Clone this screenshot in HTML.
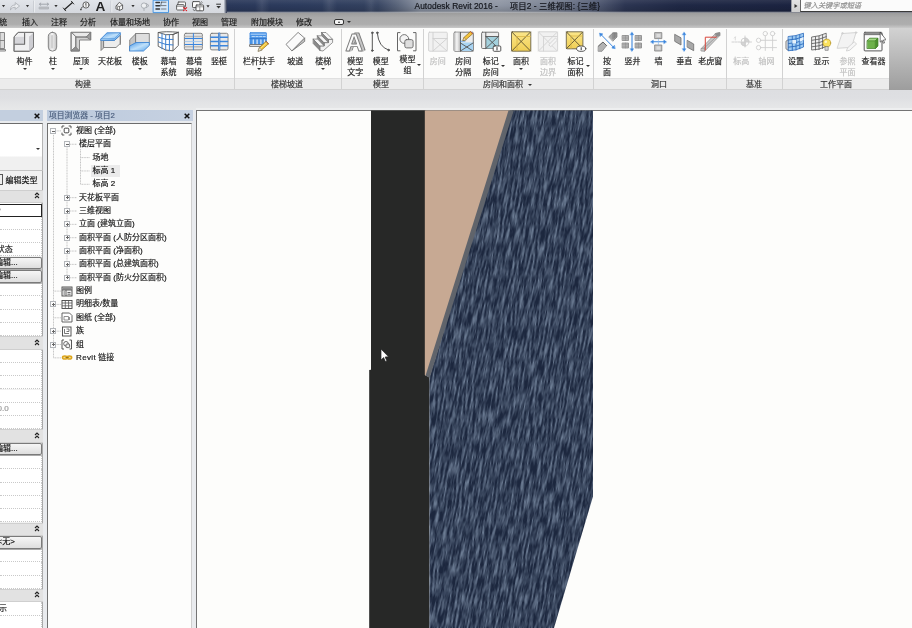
<!DOCTYPE html>
<html lang="zh"><head><meta charset="utf-8"><title>Autodesk Revit 2016 - 项目2 - 三维视图: {三维}</title>
<style>
*{box-sizing:border-box;margin:0;padding:0}
html,body{width:912px;height:628px;overflow:hidden;background:#fdfdfb}
body{font-family:"Liberation Sans","Noto Sans CJK SC",sans-serif;font-size:8px;color:#222;position:relative;line-height:1}
.abs{position:absolute}
.t{position:absolute;white-space:nowrap;transform:translate(-50%,-50%);text-align:center;line-height:10.8px;filter:blur(.25px);-webkit-text-stroke:.18px currentColor}
.tl{position:absolute;white-space:nowrap;transform:translate(0,-50%);line-height:10px;filter:blur(.25px);-webkit-text-stroke:.18px currentColor}
.dis{color:#c0c0c0}
.sep{position:absolute;top:29px;width:1px;height:60px;background:#d2d2d2}
.arr{position:absolute;width:0;height:0;border-left:2px solid transparent;border-right:2px solid transparent;border-top:2.5px solid #333;transform:translate(-50%,-50%)}
svg{position:absolute;overflow:visible}
</style></head><body>

<div class="abs" id="titlebar" style="left:0;top:0;width:912px;height:13px;background:linear-gradient(90deg,#2a385a 224px,#2c3b5d 300px,#33415f 375px,#5b667c 398px,#878f9e 420px,#8f96a4 500px,#7d8595 545px,#5a637a 590px,#2c3552 625px,#1f2845 680px,#1b2340 795px)"></div>
<div class="abs" style="left:0;top:0;width:912px;height:13px;background:linear-gradient(90deg,rgba(255,255,255,0) 255px,rgba(255,255,255,.09) 262px,rgba(255,255,255,0) 270px,rgba(255,255,255,0) 322px,rgba(255,255,255,.09) 329px,rgba(255,255,255,0) 337px,rgba(255,255,255,0) 364px,rgba(255,255,255,.08) 371px,rgba(255,255,255,0) 378px)"></div>
<div class="abs" style="left:0;top:0;width:912px;height:13px;background:linear-gradient(180deg,rgba(255,255,255,.08),rgba(255,255,255,0) 40%,rgba(0,0,0,.12) 85%,rgba(190,190,190,.9) 100%)"></div>
<div class="abs" id="qat" style="left:0;top:0;width:224px;height:13px;background:linear-gradient(180deg,#e2e5ea,#d5d8de)"></div>
<div class="abs" style="left:224px;top:0;width:3px;height:13px;background:linear-gradient(90deg,#c8ccd4,#27304a)"></div>
<div class="tl" style="left:414.5px;top:6px;font-size:8.4px;color:#14161c;letter-spacing:.05px">Autodesk Revit 2016 -&nbsp;&nbsp;&nbsp;&nbsp;&nbsp;项目2 - 三维视图: {三维}</div>
<div class="abs" style="left:790.5px;top:0;width:10px;height:11.6px;background:linear-gradient(180deg,#e4e4e4,#cfcfcf);border-right:1px solid #7a7a7a;border-left:1px solid #9a9da5"></div>
<div class="arr" style="left:795.5px;top:5.8px;border-top:2.5px solid transparent;border-bottom:2.5px solid transparent;border-left:3px solid #333;border-right:0"></div>
<div class="abs" style="left:800px;top:0;width:112px;height:12px;background:#fbfbfb;border-bottom:1.5px solid #3a3a3a;border-left:1px solid #666"></div>
<div class="tl" style="left:803.5px;top:5.6px;font-size:7.2px;font-style:italic;color:#8f8f8f">键入关键字或短语</div>

<div class="abs" id="tabbar" style="left:0;top:13px;width:912px;height:15px;background:linear-gradient(180deg,#9c9c9c 0,#aaaaaa 30%,#adadad 75%,#c9c9c9 100%)"></div>
<div class="t" style="left:3px;top:23px;font-size:8px;color:#1d1d1d">统</div>
<div class="t" style="left:30px;top:23px;font-size:8px;color:#1d1d1d">插入</div>
<div class="t" style="left:59px;top:23px;font-size:8px;color:#1d1d1d">注释</div>
<div class="t" style="left:88px;top:23px;font-size:8px;color:#1d1d1d">分析</div>
<div class="t" style="left:130px;top:23px;font-size:8px;color:#1d1d1d">体量和场地</div>
<div class="t" style="left:171px;top:23px;font-size:8px;color:#1d1d1d">协作</div>
<div class="t" style="left:200px;top:23px;font-size:8px;color:#1d1d1d">视图</div>
<div class="t" style="left:229px;top:23px;font-size:8px;color:#1d1d1d">管理</div>
<div class="t" style="left:267px;top:23px;font-size:8px;color:#1d1d1d">附加模块</div>
<div class="t" style="left:304px;top:23px;font-size:8px;color:#1d1d1d">修改</div>
<div class="abs" style="left:334px;top:18.5px;width:10px;height:6px;border:1px solid #333;border-radius:2px;background:#f4f4f4"></div>
<div class="arr" style="left:339px;top:21.5px;border-top:0;border-bottom:2px solid #333;border-left-width:1.5px;border-right-width:1.5px"></div>
<div class="arr" style="left:348.5px;top:22px"></div>

<div class="abs" id="ribbon" style="left:0;top:28px;width:889px;height:50px;background:#fcfcfb"></div>
<div class="abs" id="ribtitle" style="left:0;top:77.8px;width:889px;height:12.2px;background:#ececec;border-top:1px solid #e0e0e0;border-bottom:1.2px solid #d2d2d2"></div>
<div class="abs" style="left:889px;top:28px;width:23px;height:62px;background:linear-gradient(180deg,#d2d2d2,#bdbdbd 40%,#9d9d9d)"></div>
<div class="abs" id="optbar" style="left:0;top:90px;width:912px;height:20px;background:linear-gradient(180deg,#dddee1 0,#dedfe2 8px,#e3e4e6 13px,#e7e8e9 100%)"></div>
<div class="sep" style="left:234px"></div><div class="sep" style="left:341px"></div><div class="sep" style="left:422.5px"></div><div class="sep" style="left:592.5px"></div><div class="sep" style="left:726px"></div><div class="sep" style="left:782px"></div>
<div class="t" style="left:24.6px;top:61.6px">构件</div><div class="arr" style="left:24.6px;top:69.3px"></div>
<div class="t" style="left:53px;top:61.6px">柱</div><div class="arr" style="left:53px;top:69.3px"></div>
<div class="t" style="left:81px;top:61.6px">屋顶</div><div class="arr" style="left:81px;top:69.3px"></div>
<div class="t" style="left:110px;top:61.6px">天花板</div>
<div class="t" style="left:139.8px;top:61.6px">楼板</div><div class="arr" style="left:139.8px;top:69.3px"></div>
<div class="t" style="left:168.4px;top:61.6px">幕墙</div><div class="t" style="left:168.4px;top:72.6px">系统</div>
<div class="t" style="left:194px;top:61.6px">幕墙</div><div class="t" style="left:194px;top:72.6px">网格</div>
<div class="t" style="left:219px;top:61.6px">竖梃</div>
<div class="t" style="left:259px;top:61.6px">栏杆扶手</div><div class="arr" style="left:259px;top:69.3px"></div>
<div class="t" style="left:295.3px;top:61.6px">坡道</div>
<div class="t" style="left:323.2px;top:61.6px">楼梯</div><div class="arr" style="left:323.2px;top:69.3px"></div>
<div class="t" style="left:355.3px;top:61.6px">模型</div><div class="t" style="left:355.3px;top:72.6px">文字</div>
<div class="t" style="left:380.7px;top:61.6px">模型</div><div class="t" style="left:380.7px;top:72.6px">线</div>
<div class="t" style="left:407.4px;top:60.3px">模型</div><div class="t" style="left:407.4px;top:71.3px">组</div><div class="arr" style="left:419.2px;top:65px"></div>
<div class="t dis" style="left:437.7px;top:61.6px">房间</div>
<div class="t" style="left:463.2px;top:61.6px">房间</div><div class="t" style="left:463.2px;top:72.6px">分隔</div>
<div class="t" style="left:490.7px;top:61.6px">标记</div><div class="t" style="left:490.7px;top:72.6px">房间</div><div class="arr" style="left:502.9px;top:66px"></div>
<div class="t" style="left:521px;top:61.6px">面积</div><div class="arr" style="left:521px;top:69.3px"></div>
<div class="t dis" style="left:548px;top:61.6px">面积</div><div class="t dis" style="left:548px;top:72.6px">边界</div>
<div class="t" style="left:575.4px;top:61.6px">标记</div><div class="t" style="left:575.4px;top:72.6px">面积</div><div class="arr" style="left:587.6px;top:66px"></div>
<div class="t" style="left:607px;top:61.6px">按</div><div class="t" style="left:607px;top:72.6px">面</div>
<div class="t" style="left:632.5px;top:61.6px">竖井</div>
<div class="t" style="left:658.4px;top:61.6px">墙</div>
<div class="t" style="left:684.2px;top:61.6px">垂直</div>
<div class="t" style="left:710.2px;top:61.6px">老虎窗</div>
<div class="t dis" style="left:741.2px;top:61.6px">标高</div>
<div class="t dis" style="left:766.4px;top:61.6px">轴网</div>
<div class="t" style="left:796px;top:61.6px">设置</div>
<div class="t" style="left:821.6px;top:61.6px">显示</div>
<div class="t dis" style="left:847.6px;top:61.6px">参照</div><div class="t dis" style="left:847.6px;top:72.6px">平面</div>
<div class="t" style="left:873.4px;top:61.6px">查看器</div>
<div class="t" style="left:83px;top:85.2px;color:#333">构建</div><div class="t" style="left:287px;top:85.2px;color:#333">楼梯坡道</div><div class="t" style="left:381px;top:85.2px;color:#333">模型</div><div class="t" style="left:503px;top:85.2px;color:#333">房间和面积</div><div class="t" style="left:659px;top:85.2px;color:#333">洞口</div><div class="t" style="left:754px;top:85.2px;color:#333">基准</div><div class="t" style="left:836px;top:85.2px;color:#333">工作平面</div><div class="arr" style="left:530px;top:85px"></div>
<svg id="ribicons" style="left:0;top:0;filter:blur(.3px)" width="912" height="110" viewBox="0 0 912 110" stroke-linejoin="round" stroke-linecap="round">
<defs>
<linearGradient id="gv" x1="0" y1="0" x2="0" y2="1"><stop offset="0" stop-color="#f4f4f4"/><stop offset="1" stop-color="#c9c9c9"/></linearGradient>
<linearGradient id="gh" x1="0" y1="0" x2="1" y2="0"><stop offset="0" stop-color="#c4c4c4"/><stop offset=".45" stop-color="#f6f6f6"/><stop offset="1" stop-color="#bdbdbd"/></linearGradient>
<linearGradient id="gb" x1="0" y1="0" x2="1" y2="1"><stop offset="0" stop-color="#4f9be8"/><stop offset=".5" stop-color="#bfe0fa"/><stop offset="1" stop-color="#5aa5ec"/></linearGradient>
<linearGradient id="gy" x1="0" y1="0" x2="0" y2="1"><stop offset="0" stop-color="#fbe68a"/><stop offset="1" stop-color="#f0cf55"/></linearGradient>
</defs>
<g stroke="#7a7a7a" stroke-width=".9"><rect x="-6" y="32.5" width="10.5" height="16" fill="#dcdcdc"/><path d="M-6 40.5H4.5M0 32.5V48.5" fill="none"/><path d="M-6 49.5H5.5V51H-6Z" fill="#e8e8e8"/></g>
<g stroke="#777" stroke-width="1"><path d="M14.4 36.6L18.1 32.4H33.5V47L29.5 51.3H14.4Z" fill="#f0f0f1"/><path d="M29.5 36.6L33.5 32.4V47L29.5 51.3Z" fill="#cdcdd2" stroke="none"/><path d="M15 36.8H24.4V44.2H15Z" fill="#d6d6da" stroke="none"/><path d="M24.6 33.2V44.3H14.6" fill="none" stroke="#686868" stroke-width="1.1"/><path d="M14.4 36.6L18.1 32.4H33.5V47L29.5 51.3H14.4Z" fill="none"/><path d="M29.5 36.8V51" fill="none" stroke="#bdbdc2" stroke-width=".6"/></g>
<g stroke="#7a7a7a" stroke-width=".9"><rect x="48.3" y="32.3" width="8.4" height="18.8" rx="4" fill="url(#gh)"/><rect x="51" y="35" width="2.2" height="13.5" rx="1" fill="#d0d0d0" stroke="none"/></g>
<g stroke="#7a7a7a" stroke-width=".9"><path d="M71.3 32.5H90.7V40H79.5V51H71.3Z" fill="#d2d2d2"/><path d="M71.3 32.5L75.8 37H86.5L90.7 32.5Z" fill="#e9e9e9"/><path d="M86.5 37L90.7 32.5V40L86.5 37Z" fill="#9d9d9d"/><path d="M75.8 37V47L71.3 51V32.5Z" fill="#f3f3f3"/><path d="M75.8 47L79.5 51H71.3Z" fill="#8f8f8f"/><path d="M75.8 37H86.5M75.8 37V47" fill="none"/></g>
<g stroke="#7a7a7a" stroke-width=".9"><path d="M101 40V50.5L104 47.5V40.4Z" fill="#c9c9c9"/><path d="M104 40.4H114.5L120.3 35V43.5L116 47.5H104Z" fill="#ededed"/><path d="M101 38.8L107 32.8H120.3V35L114.5 40.4H101Z" fill="url(#gb)" stroke="#3f86d2"/><path d="M101 38.8H114.5L120.3 32.8" fill="none" stroke="#3f86d2" stroke-width=".7"/><path d="M120.3 36.2V44.5" fill="none"/></g>
<g stroke="#7a7a7a" stroke-width=".9"><path d="M130 39.5L136 33.5V45L130 50.8Z" fill="#c6c6c6"/><path d="M136 33.5H149.3V45H136Z" fill="#dedede"/><path d="M130 45.8L136 42.5H149.3V45.5L143.5 51H130Z" fill="url(#gb)" stroke="#3f86d2"/></g>
<g fill="none" stroke-width=".9"><path d="M158.5 32.5Q166 36 173 34.5L178.3 32.3V45.5L173 50.8Q166 51.5 158.5 46.5Z" fill="#fff" stroke="#555"/><path d="M173 34.5V50.8M178.3 32.3L173 34.5" stroke="#555"/><path d="M158.5 32.5Q165 31 178.3 32.3" stroke="#555"/><path d="M162 34V48.8M165.7 35V50M169.4 35V50.8M158.5 37.3Q166 40.5 173 39.5M158.5 42Q166 45.5 173 45" stroke="#3b7fd0" stroke-width="1"/></g>
<g fill="none"><rect x="184.4" y="33.3" width="18" height="16.6" rx="1.5" fill="#e6e6e6" stroke="#777" stroke-width=".9"/><path d="M185 36.5H202M185 46.8H202" stroke="#b9b9b9" stroke-width="1.6"/><path d="M185 38.5H202M185 44.5H202M193.4 33.5V49.8" stroke="#3b86de" stroke-width="1"/><path d="M185 41.5H202" stroke="#9cc4ee" stroke-width=".8"/></g>
<g fill="none"><rect x="210.4" y="33.3" width="17.6" height="16.6" rx="1.5" fill="#e9e9e9" stroke="#777" stroke-width=".9"/><path d="M211 37.3H227.5M211 41.5H227.5M211 45.7H227.5" stroke="#3b86de" stroke-width="1.5"/><path d="M219.2 33.5V49.8" stroke="#2e6fc2" stroke-width="2.2"/><path d="M219.2 33.5V49.8" stroke="#9cc4ee" stroke-width=".8"/></g>
<g fill="none"><rect x="249.9" y="32.5" width="16.6" height="11.8" rx=".8" fill="#4a93e6" stroke="#3b84da" stroke-width=".6"/><path d="M251 34.2H265.5" stroke="#b5d8fa" stroke-width="1"/><path d="M252 36.6H254.5M255.8 36.6H258.2M259.6 36.6H262M263.3 36.6H265.3" stroke="#cfe6fc" stroke-width=".9"/><path d="M250 38.6H266.4" stroke="#2f74c8" stroke-width=".8"/><path d="M253.3 40V44M257.1 40V44M260.9 40V44M264.5 40V43" stroke="#cfe4fa" stroke-width="1.3"/><path d="M250 44.6H262.3V46.4H250Z" fill="#fafafa" stroke="#555" stroke-width=".8"/><path d="M258.2 50.9L259.3 47.7L266 41.4L268.5 43.8L261.6 50Z" fill="#f5c73a" stroke="#8c6a1a" stroke-width=".7"/><path d="M260.4 48.6L266.9 42.5" stroke="#fbe88a" stroke-width=".9"/><path d="M258.2 50.9L259.3 47.7L261.6 50Z" fill="#e9e4da" stroke="#777" stroke-width=".5"/><path d="M266 41.4L268.5 43.8" stroke="#a0522d" stroke-width="1"/></g>
<g stroke="#7a7a7a" stroke-width=".9"><path d="M286.3 44.1L298.1 32.4L304.7 38.2L292.2 50.7Z" fill="#fafafa"/><path d="M304.7 38.2V41.4L292.2 50.7Z" fill="#c4c4c4"/></g>
<g stroke="#6f6f6f" stroke-width=".7"><path d="M320 45.9H324.2V42.6H328.4V39.3H332.6V42.5L323 51L320 50.5Z" fill="#f1f1f1"/><path d="M313.4 39.1L320 45.9V50.5L313.4 43.7Z" fill="#8b8b8b"/><path d="M317.6 35.8L324.2 42.6V45.9L317.6 39.1Z" fill="#8b8b8b"/><path d="M321.8 32.5L328.4 39.3V42.6L321.8 35.8Z" fill="#8b8b8b"/><path d="M321.8 32.5H326L332.6 39.3H328.4Z" fill="#f6f6f6"/><path d="M317.6 35.8H321.8L328.4 42.6H324.2Z" fill="#f6f6f6"/><path d="M313.4 39.1H317.6L324.2 45.9H320Z" fill="#f6f6f6"/></g>
<g font-family="Liberation Sans, sans-serif" font-weight="bold" font-size="24.5" text-anchor="middle" stroke-width=".9"><text x="356.8" y="50.3" fill="#c6c6c6" stroke="#7d7d7d">A</text><text x="355.6" y="50.5" fill="#c6c6c6" stroke="#c6c6c6">A</text><text x="354.2" y="50.8" fill="#fbfbfb" stroke="#7d7d7d">A</text></g>
<g fill="none" stroke="#555" stroke-width="1"><path d="M372.3 33V50.5"/><path d="M377.3 33Q378.5 47 388.5 50"/><circle cx="372.3" cy="32.8" r=".8" fill="#555"/><circle cx="372.3" cy="50.6" r=".8" fill="#555"/><circle cx="377.3" cy="32.8" r=".8" fill="#555"/><circle cx="388.6" cy="50.1" r=".8" fill="#555"/></g>
<g fill="none" stroke="#666" stroke-width="1"><path d="M400 32.6H397.5V50.8H400M413.5 32.6H416V50.8H413.5"/><circle cx="404.3" cy="39" r="4.4" fill="#f4f4f4" stroke-width=".9"/><rect x="404.8" y="39.6" width="8.3" height="8.3" rx="1.8" fill="#dedede" stroke-width=".9"/></g>
<g fill="none" stroke="#cfcfcf" stroke-width=".9"><rect x="428.6" y="32.2" width="18.7" height="19" rx="1" fill="#f1f1f1"/><path d="M433 32.5V51M433 38.5H447M433 38.5L447 51M447 38.5L433 51"/></g>
<g fill="none" stroke="#666" stroke-width=".9"><rect x="454" y="32.2" width="19.3" height="19" rx="1" fill="#ececec"/><path d="M454.3 32.5H460V51H454.3Z" fill="url(#gh)" stroke="none"/><path d="M460.5 42.5H473V51H460.5Z" fill="#a9d4f2" stroke="none"/><path d="M460.5 32.5V51M460.5 43L473 51M473 43L460.5 51" stroke="#555"/><path d="M460.5 41.2H465" stroke="#4a90d9" stroke-width=".8"/><path d="M463 40.2L464 37.4L470.5 31.6L472.6 33.8L466 39.6Z" fill="#f3c33c" stroke="#8c6a1a" stroke-width=".7"/><path d="M463 40.2L464 37.4L466 39.6Z" fill="#f6ead0" stroke="#8c6a1a" stroke-width=".5"/><path d="M470.5 31.6L472.6 33.8" stroke="#c2563a" stroke-width="1"/></g>
<g fill="none" stroke="#666" stroke-width=".9"><rect x="481.6" y="32.2" width="17" height="16.3" rx="1" fill="#ededed"/><path d="M486 36.5H498.3V48.3H486Z" fill="#a3d0dc" stroke="none"/><path d="M485.8 32.5V48.3M485.8 36.5H498.4M486 36.5L498.4 48.3M498.4 36.5L486 48.3" stroke="#555"/><rect x="493.2" y="46" width="7.6" height="5.3" rx="1" fill="#fff" stroke="#444" stroke-width=".9"/><path d="M497 47.5V50" stroke="#333" stroke-width="1"/></g>
<g fill="none" stroke="#5b5130" stroke-width=".9"><rect x="511.5" y="31.8" width="19.3" height="19.4" rx=".8" fill="url(#gy)" stroke="#6a6247"/><path d="M511.8 32L530.5 51M530.5 32L511.8 51"/><path d="M517 36.5H530.5M517 36.5V51" stroke="#d9b545" stroke-width=".8"/></g>
<g fill="none" stroke="#d2d2d2" stroke-width=".9"><rect x="538.3" y="31.8" width="19.3" height="19.4" rx=".8" fill="#f1f1f1"/><path d="M538.5 32L557.3 51M557.3 32L538.5 51M543.5 36.5H557M543.5 36.5V51"/><path d="M549 44.5L555.5 38L557.5 40L551 46.5Z" fill="#f4f4f4"/></g>
<g fill="none" stroke="#5b5130" stroke-width=".9"><rect x="566.3" y="31.8" width="16.6" height="17" rx=".8" fill="url(#gy)" stroke="#6a6247"/><path d="M566.5 32L582.7 48.6M582.7 32L566.5 48.6"/><path d="M571 36H582.7M571 36V48.6" stroke="#d9b545" stroke-width=".8"/><ellipse cx="581.2" cy="48.7" rx="4.6" ry="2.7" fill="#fff" stroke="#444" stroke-width=".9"/><path d="M581.2 47.6V49.8" stroke="#333" stroke-width="1"/></g>
<g stroke="#7a7a7a" stroke-width=".7"><path d="M609 36.6L613 32.8H617V37L613 41Z" fill="#a4a4a4"/><path d="M613 32.8V38.5M614.4 32.8V38M615.8 32.8V37" fill="none" stroke="#6a6a6a" stroke-width=".6"/><path d="M598.5 46L603 42L606.6 45.6L602 51.3H598.5Z" fill="#b3b3b3"/><path d="M598.5 46L603 42L606.6 45.6" stroke="#555" fill="none"/><path d="M600.5 34L614 47.8" stroke="#3b86de" stroke-width="1" fill="none"/><path d="M599.8 33.3l3 .6-2.4 2.4zM614.8 48.6l-3-.6 2.4-2.4z" fill="#3b86de" stroke="#3b86de" stroke-width=".6"/></g>
<g stroke="#7d7d7d" stroke-width=".7" fill="#b9b9b9"><rect x="622.5" y="35.5" width="6" height="5"/><rect x="622.5" y="43" width="6" height="5"/><rect x="635.5" y="35.5" width="6" height="5"/><rect x="635.5" y="43" width="6" height="5"/><path d="M622.5 37.2H628.5M622.5 38.8H628.5M622.5 44.7H628.5M622.5 46.3H628.5M635.5 37.2H641.5M635.5 38.8H641.5M635.5 44.7H641.5M635.5 46.3H641.5M625.5 35.5V40.5M625.5 43V48M638.5 35.5V40.5M638.5 43V48" stroke="#8a8a8a" stroke-width=".5" fill="none"/><path d="M632 33.5V50" stroke="#3b86de" stroke-width="1.1" fill="none"/><path d="M632 32.2l1.7 2.6h-3.4zM632 51.3l1.7-2.6h-3.4z" fill="#3b86de" stroke="#3b86de" stroke-width=".4"/></g>
<g stroke="#7d7d7d" stroke-width=".8"><rect x="655" y="32.6" width="6.8" height="6" fill="#c4c4c4"/><rect x="656.5" y="34" width="3.8" height="3" fill="#dcdcdc" stroke="none"/><rect x="655" y="45" width="6.8" height="6" fill="#c4c4c4"/><rect x="656.5" y="46.4" width="3.8" height="3.2" fill="#dcdcdc" stroke="none"/><path d="M652 41.8H665" stroke="#3b86de" stroke-width="1.1" fill="none"/><path d="M650.7 41.8l2.6-1.7v3.4zM666.4 41.8l-2.6-1.7v3.4z" fill="#3b86de" stroke="#3b86de" stroke-width=".4"/><path d="M658.4 39.5V44.5" stroke="#8ab8ec" stroke-width=".7"/></g>
<g stroke="#6d6d6d" stroke-width=".8"><path d="M675 34.5L681 37.8V45L675 41.5Z" fill="#a8a8a8"/><path d="M687.5 40.5L693.7 44V50.7L687.5 47.3Z" fill="#a8a8a8"/><path d="M684.2 33.5V50" stroke="#3b86de" stroke-width="1.1" fill="none"/><path d="M684.2 32.2l1.7 2.6h-3.4zM684.2 51.3l1.7-2.6h-3.4z" fill="#3b86de" stroke="#3b86de" stroke-width=".4"/></g>
<g stroke="#8a8a8a" stroke-width=".7"><path d="M701.3 48.5L715.5 33.5L719.8 32.6V35.5L704.5 51.3L701.3 51Z" fill="#c9c9c9"/><path d="M715.5 33.5L719.8 32.6V35.5L716.5 36.5Z" fill="#8d8d8d"/><path d="M701.3 48.5L704.3 48L704.5 51.3" fill="none"/><path d="M704.3 48L716.5 36.5" fill="none"/><path d="M705.3 50V37.2H716.3" stroke="#d8453a" stroke-width="1" fill="none"/></g>
<g stroke="#cdcdcd" stroke-width=".9" fill="none"><circle cx="745" cy="42" r="4"/><path d="M745 38A4 4 0 0 1 749 42H745ZM745 46A4 4 0 0 1 741 42H745Z" fill="#d4d4d4"/><path d="M732 42H740M745 36V48M750 42H751.5" stroke-dasharray="2 1"/><path d="M735.3 37V40M734.3 38L735.3 37" stroke-width=".7"/></g>
<g stroke="#cfcfcf" stroke-width=".9" fill="none"><circle cx="765.3" cy="33.6" r="2.2"/><circle cx="772.6" cy="33.6" r="2.2"/><circle cx="758.6" cy="40.3" r="2.2"/><circle cx="758.6" cy="47.6" r="2.2"/><path d="M765.3 35.8V50.5M772.6 35.8V50.5M760.8 40.3H776.5M760.8 47.6H776.5"/></g>
<g stroke-width=".8"><path d="M786.3 41L788.5 39.5V50.5L786.3 49Z" fill="#e2e2e2" stroke="#666"/><path d="M788.5 36.5Q796 36.2 803.5 33.2V47Q796 50.8 788.5 50.8Z" fill="#9ccaf3" stroke="#2d6cbd"/><path d="M792.3 36.3V50.6M796 35.7V50M799.8 34.7V48.8M788.5 40Q796 39.7 803.5 36.7M788.5 43.6Q796 43.3 803.5 40.2M788.5 47.2Q796 47 803.5 43.7" stroke="#2d6cbd" fill="none" stroke-width=".9"/><path d="M792.3 40H796V43.5H792.3ZM799.8 38.4L803.5 36.9V40.3L799.8 41.8Z" fill="#e6f2fc" stroke="none"/></g>
<g stroke-width=".8"><path d="M812 37Q819 36.5 826.2 33.2V46.5Q819 50 812 50Z" fill="#efefef" stroke="#555"/><path d="M815.5 36.8V50M819 36.2V49.6M822.6 35V48.5M812 40.3Q819 40 826.2 36.7M812 43.6Q819 43.3 826.2 40.2M812 46.8Q819 46.6 826.2 43.4" stroke="#555" fill="none" stroke-width=".8"/><circle cx="826.8" cy="43" r="3.9" fill="#fbe25e" stroke="#b8962a" stroke-width=".7"/><path d="M825.4 46.6H828.2V50.3H825.4Z" fill="#d9d9d9" stroke="#666" stroke-width=".6"/><circle cx="825.8" cy="41.8" r="1.3" fill="#fff6c5" stroke="none"/></g>
<g stroke="#d0d0d0" stroke-width=".9" fill="#f3f3f3"><path d="M842.5 33.5L856 32.6L851.5 47.3L837.5 48.3Z"/><path d="M846.5 50.6L847.6 47.8L854.2 41.8L856.6 44L850 50Z" fill="#f6f6f6"/><circle cx="842.5" cy="33.3" r=".8" fill="#ccc"/><circle cx="856" cy="32.6" r=".8" fill="#ccc"/></g>
<g stroke-width=".9"><rect x="864.2" y="32.3" width="17.8" height="18.6" rx=".8" fill="#fbfbfb" stroke="#444"/><path d="M864.5 34.6H881.8" stroke="#444" fill="none"/><path d="M864.5 32.6H881.8V34.6H864.5Z" fill="#8e8e8e" stroke="none"/><path d="M867.3 40.6L869.6 38.3H877.8V46L875.5 48.5H867.3Z" fill="#6db14a" stroke="#3e7d25" stroke-width=".7"/><path d="M867.3 40.6L869.6 38.3H877.8L875.5 40.6Z" fill="#a5d887" stroke="#3e7d25" stroke-width=".5"/><path d="M875.5 40.6L877.8 38.3V46L875.5 48.5Z" fill="#4b8f2e" stroke="#3e7d25" stroke-width=".5"/><path d="M880.2 32.6V42.2L882.2 40.4L883.5 43.3L884.6 42.8L883.4 40L885.7 39.8Z" fill="#fff" stroke="#222" stroke-width=".6"/></g>
</svg>

<svg id="qaticons" style="left:0;top:0;filter:blur(.3px)" width="230" height="14" viewBox="0 0 230 14" stroke-linejoin="round" stroke-linecap="round" fill="none">
<path d="M1.9 5H5.1L3.5 7.2Z" fill="#333" stroke="none"/>
<path d="M10.5 9.5Q10.5 5 15.2 5V2.6L19.6 6L15.2 9.4V7.2Q12.5 7 10.5 9.5Z" fill="#e9ebee" stroke="#a9adb3" stroke-width=".8"/>
<path d="M25.9 5H29.1L27.5 7.2Z" fill="#333" stroke="none"/>
<path d="M33.5 1V12" stroke="#bcc0c6" stroke-width=".8"/><path d="M34.3 1V12" stroke="#f4f5f7" stroke-width=".8"/>
<path d="M39.5 4.2H48.5M40.8 3L39.5 4.2L40.8 5.4M47.2 3L48.5 4.2L47.2 5.4" stroke="#9a9ea5" stroke-width=".9"/><path d="M39.5 7H48.5V9H39.5Z" fill="#bfc2c7" stroke="#a2a6ac" stroke-width=".6"/>
<path d="M54.4 5H57.6L56 7.2Z" fill="#333" stroke="none"/>
<path d="M64.5 9.5L72.5 2.5" stroke="#222" stroke-width="1.2"/><path d="M63.3 8L65.8 10.8M71.3 1.2L73.8 4" stroke="#222" stroke-width=".9"/>
<circle cx="86" cy="5" r="3.1" fill="#f2f2f2" stroke="#555" stroke-width=".9"/><path d="M86 3.6V6.4M85.3 4.2L86 3.6" stroke="#444" stroke-width=".7"/><path d="M83.2 6.5Q80.8 7 80.8 9.3" stroke="#555" stroke-width=".9"/><path d="M80 9h1.7v1.2H80z" fill="#555" stroke="none"/>
<text x="100.5" y="11" text-anchor="middle" font-family="Liberation Sans, sans-serif" font-weight="bold" font-size="13.6" fill="#222" stroke="none">A</text>
<path d="M111 1V12" stroke="#bcc0c6" stroke-width=".8"/><path d="M111.8 1V12" stroke="#f4f5f7" stroke-width=".8"/>
<path d="M116.3 5.8L119.3 2.3L122.6 5V9L119.8 10.3L116.3 9Z" fill="#f3f3f3" stroke="#555" stroke-width=".9"/><path d="M116.3 5.8L119.5 6.6L122.6 5M119.5 6.6V10.2" stroke="#555" stroke-width=".7"/><path d="M117.5 7.3v1.6" stroke="#666" stroke-width=".7"/>
<path d="M131.4 5H134.6L133 7.2Z" fill="#333" stroke="none"/>
<circle cx="144" cy="5.6" r="2.7" fill="#eef0f2" stroke="#a6aab0" stroke-width=".9"/><path d="M146.3 3.5L149 5.6L146.3 7.7M144 8.3V10.5" stroke="#a6aab0" stroke-width=".9"/>
<rect x="153.5" y=".2" width="15" height="12.4" fill="#d3e6f9" stroke="#3a8ee0" stroke-width=".9"/><path d="M156 2.6H159.5M156 5.8H159.5M156 9H159.5" stroke="#333" stroke-width="1.5"/><path d="M161.5 2.2H166M161.5 5.6H166M161.5 9H166M160.6 6L161.6 2" stroke="#333" stroke-width=".6"/>
<rect x="178" y="2" width="7.5" height="5" rx=".8" fill="#fdfdfd" stroke="#555" stroke-width=".9"/><rect x="176.6" y="4.6" width="7.5" height="5.4" rx=".8" fill="#fdfdfd" stroke="#555" stroke-width=".9"/><path d="M176.8 6.2H184" stroke="#555" stroke-width=".7"/><path d="M183.6 7.6L186.6 10.6M186.6 7.6L183.6 10.6" stroke="#d8232a" stroke-width="1.2"/>
<rect x="192.5" y="1.6" width="7.5" height="6" rx=".8" fill="#fdfdfd" stroke="#444" stroke-width=".9"/><rect x="196" y="5" width="7.6" height="5.8" rx=".8" fill="#fdfdfd" stroke="#444" stroke-width=".9"/><path d="M196.2 6.8H203.4M199.8 7V10.6" stroke="#555" stroke-width=".6"/><path d="M193.3 9.4l.8 1.4 1.2-.6M201.3 1.6l1 .9-.9 1" stroke="#444" stroke-width=".6"/>
<path d="M206.4 5.2H209.6L208 7.4Z" fill="#333" stroke="none"/>
<path d="M216.6 4.2H220.6" stroke="#333" stroke-width="1"/><path d="M216.4 6H220.8L218.6 8.4Z" fill="#333" stroke="none"/>
</svg>


<div class="abs" id="viewport" style="left:196px;top:109.8px;width:716px;height:519px;background:#fdfdfb;border-left:1.2px solid #747474;border-top:1.2px solid #747474"></div>
<div class="abs" style="left:196px;top:108.3px;width:716px;height:1.5px;background:#eeeff0"></div>
<svg id="scene" style="left:197px;top:111px" width="715" height="517" viewBox="197 111 715 517">
<defs>
<filter id="fab" x="0" y="0" width="100%" height="100%" filterUnits="objectBoundingBox" color-interpolation-filters="sRGB">
<feTurbulence type="fractalNoise" baseFrequency="0.5 0.06" numOctaves="3" seed="5" result="n"/>
<feColorMatrix in="n" type="matrix" values="0 0 0 0 0  0 0 0 0 0  0 0 0 0 0  0 0 0 2.4 -0.86" result="a"/>
<feFlood flood-color="#6c7c93" result="c"/>
<feComposite in="c" in2="a" operator="in" result="light"/>
<feFlood flood-color="#1c273e" result="base"/>
<feMerge result="m"><feMergeNode in="base"/><feMergeNode in="light"/></feMerge><feGaussianBlur in="m" stdDeviation="0.3"/>
</filter>
<clipPath id="bluec"><polygon points="512,110.5 593,110.5 593,496.4 554,628 429.4,628 429.4,377"/></clipPath>
</defs>
<polygon points="371,110.5 425.5,110.5 425.5,375.4 429.4,377 429.4,628 369.2,628 369.2,370 371,369.7" fill="#272827"/>
<polygon points="424.8,110.5 510,110.5 427,376 424.8,375" fill="#c7a993"/>
<g clip-path="url(#bluec)"><g transform="translate(425 110) skewX(-9)"><rect x="0" y="0" width="300" height="520" filter="url(#fab)"/></g></g>
<polygon points="508.5,110.5 513.8,110.5 429.6,378 425.6,375.4" fill="#60646b"/>
<path d="M381 349 L381 360 L383.6 357.6 L385.4 361.6 L386.9 360.9 L385.1 357 L388.6 356.8 Z" fill="#fff" stroke="#222" stroke-width=".7"/>
</svg>

<div class="abs" id="gap" style="left:0;top:109.8px;width:196px;height:519px;background:#e9ebee"></div>
<div class="abs" id="prophead" style="left:0;top:109.8px;width:43.4px;height:11.2px;background:#c3cfdf"></div>
<svg style="left:34.4px;top:113px" width="6" height="6" viewBox="0 0 6 6"><path d="M.7 .7L5.3 5.3M5.3 .7L.7 5.3" stroke="#111" stroke-width="1.5" fill="none"/></svg>
<div class="abs" id="propbody" style="left:0;top:123px;width:43.4px;height:506px;background:#f1f1f1;border-right:1px solid #a9a9a9;border-top:1.2px solid #6c6c6c"></div>
<div class="abs" style="left:0;top:124px;width:42.5px;height:47px;background:linear-gradient(180deg,#fff 0,#fff 32px,#f0f0f0 33px,#f0f0f0 100%);border-right:1px solid #b5b5b5;border-bottom:1px solid #c4c4c4"></div>
<div class="arr" style="left:38px;top:148.5px"></div>
<div class="abs" style="left:0;top:174px;width:3px;height:11px;border:1px solid #555;border-left:0;background:#eee"></div>
<div class="tl" style="left:5.5px;top:181px;color:#111">编辑类型</div>
<div class="abs" style="left:0;top:190.0px;width:43px;height:13.3px;background:#e2e2e2;border-top:1px solid #cfcfcf;border-bottom:1px solid #cfcfcf"></div><svg style="left:33.6px;top:192.3px" width="6" height="7" viewBox="0 0 6 7" fill="none" stroke="#222" stroke-width="1.1"><path d="M1 3L3 1L5 3M1 6L3 4L5 6"/></svg>
<div class="abs" style="left:0;top:203.3px;width:42px;height:13.3px;background:#fff;border-bottom:1px dotted #c9c9c9;border-right:1px dotted #c9c9c9"></div>
<div class="abs" style="left:0;top:216.6px;width:42px;height:13.3px;background:#fff;border-bottom:1px dotted #c9c9c9;border-right:1px dotted #c9c9c9"></div>
<div class="abs" style="left:0;top:229.9px;width:42px;height:13.3px;background:#fff;border-bottom:1px dotted #c9c9c9;border-right:1px dotted #c9c9c9"></div>
<div class="abs" style="left:0;top:243.2px;width:42px;height:13.3px;background:#fff;border-bottom:1px dotted #c9c9c9;border-right:1px dotted #c9c9c9"></div>
<div class="abs" style="left:0;top:256.5px;width:42px;height:13.3px;background:#fff;border-bottom:1px dotted #c9c9c9;border-right:1px dotted #c9c9c9"></div>
<div class="abs" style="left:0;top:269.8px;width:42px;height:13.3px;background:#fff;border-bottom:1px dotted #c9c9c9;border-right:1px dotted #c9c9c9"></div>
<div class="abs" style="left:0;top:283.1px;width:42px;height:13.3px;background:#fff;border-bottom:1px dotted #c9c9c9;border-right:1px dotted #c9c9c9"></div>
<div class="abs" style="left:0;top:296.4px;width:42px;height:13.3px;background:#fff;border-bottom:1px dotted #c9c9c9;border-right:1px dotted #c9c9c9"></div>
<div class="abs" style="left:0;top:309.7px;width:42px;height:13.3px;background:#fff;border-bottom:1px dotted #c9c9c9;border-right:1px dotted #c9c9c9"></div>
<div class="abs" style="left:0;top:323.0px;width:42px;height:13.3px;background:#fff;border-bottom:1px dotted #c9c9c9;border-right:1px dotted #c9c9c9"></div>
<div class="abs" style="left:0;top:336.3px;width:43px;height:13.3px;background:#e2e2e2;border-top:1px solid #cfcfcf;border-bottom:1px solid #cfcfcf"></div><svg style="left:33.6px;top:338.6px" width="6" height="7" viewBox="0 0 6 7" fill="none" stroke="#222" stroke-width="1.1"><path d="M1 3L3 1L5 3M1 6L3 4L5 6"/></svg>
<div class="abs" style="left:0;top:349.6px;width:42px;height:13.3px;background:#fff;border-bottom:1px dotted #c9c9c9;border-right:1px dotted #c9c9c9"></div>
<div class="abs" style="left:0;top:362.9px;width:42px;height:13.3px;background:#fff;border-bottom:1px dotted #c9c9c9;border-right:1px dotted #c9c9c9"></div>
<div class="abs" style="left:0;top:376.2px;width:42px;height:13.3px;background:#fff;border-bottom:1px dotted #c9c9c9;border-right:1px dotted #c9c9c9"></div>
<div class="abs" style="left:0;top:389.5px;width:42px;height:13.3px;background:#fff;border-bottom:1px dotted #c9c9c9;border-right:1px dotted #c9c9c9"></div>
<div class="abs" style="left:0;top:402.8px;width:42px;height:13.3px;background:#fff;border-bottom:1px dotted #c9c9c9;border-right:1px dotted #c9c9c9"></div>
<div class="abs" style="left:0;top:416.1px;width:42px;height:13.3px;background:#fff;border-bottom:1px dotted #c9c9c9;border-right:1px dotted #c9c9c9"></div>
<div class="abs" style="left:0;top:429.4px;width:43px;height:13.3px;background:#e2e2e2;border-top:1px solid #cfcfcf;border-bottom:1px solid #cfcfcf"></div><svg style="left:33.6px;top:431.7px" width="6" height="7" viewBox="0 0 6 7" fill="none" stroke="#222" stroke-width="1.1"><path d="M1 3L3 1L5 3M1 6L3 4L5 6"/></svg>
<div class="abs" style="left:0;top:442.7px;width:42px;height:13.3px;background:#fff;border-bottom:1px dotted #c9c9c9;border-right:1px dotted #c9c9c9"></div>
<div class="abs" style="left:0;top:456.0px;width:42px;height:13.3px;background:#fff;border-bottom:1px dotted #c9c9c9;border-right:1px dotted #c9c9c9"></div>
<div class="abs" style="left:0;top:469.3px;width:42px;height:13.3px;background:#fff;border-bottom:1px dotted #c9c9c9;border-right:1px dotted #c9c9c9"></div>
<div class="abs" style="left:0;top:482.6px;width:42px;height:13.3px;background:#fff;border-bottom:1px dotted #c9c9c9;border-right:1px dotted #c9c9c9"></div>
<div class="abs" style="left:0;top:495.9px;width:42px;height:13.3px;background:#fff;border-bottom:1px dotted #c9c9c9;border-right:1px dotted #c9c9c9"></div>
<div class="abs" style="left:0;top:509.2px;width:42px;height:13.3px;background:#fff;border-bottom:1px dotted #c9c9c9;border-right:1px dotted #c9c9c9"></div>
<div class="abs" style="left:0;top:522.5px;width:43px;height:13.3px;background:#e2e2e2;border-top:1px solid #cfcfcf;border-bottom:1px solid #cfcfcf"></div><svg style="left:33.6px;top:524.8px" width="6" height="7" viewBox="0 0 6 7" fill="none" stroke="#222" stroke-width="1.1"><path d="M1 3L3 1L5 3M1 6L3 4L5 6"/></svg>
<div class="abs" style="left:0;top:535.8px;width:42px;height:13.3px;background:#fff;border-bottom:1px dotted #c9c9c9;border-right:1px dotted #c9c9c9"></div>
<div class="abs" style="left:0;top:549.1px;width:42px;height:13.3px;background:#fff;border-bottom:1px dotted #c9c9c9;border-right:1px dotted #c9c9c9"></div>
<div class="abs" style="left:0;top:562.4px;width:42px;height:13.3px;background:#fff;border-bottom:1px dotted #c9c9c9;border-right:1px dotted #c9c9c9"></div>
<div class="abs" style="left:0;top:575.7px;width:42px;height:13.3px;background:#fff;border-bottom:1px dotted #c9c9c9;border-right:1px dotted #c9c9c9"></div>
<div class="abs" style="left:0;top:589.0px;width:43px;height:13.3px;background:#e2e2e2;border-top:1px solid #cfcfcf;border-bottom:1px solid #cfcfcf"></div><svg style="left:33.6px;top:591.3px" width="6" height="7" viewBox="0 0 6 7" fill="none" stroke="#222" stroke-width="1.1"><path d="M1 3L3 1L5 3M1 6L3 4L5 6"/></svg>
<div class="abs" style="left:0;top:602.3px;width:42px;height:13.3px;background:#fff;border-bottom:1px dotted #c9c9c9;border-right:1px dotted #c9c9c9"></div>
<div class="abs" style="left:0;top:615.6px;width:42px;height:13.3px;background:#fff;border-bottom:1px dotted #c9c9c9;border-right:1px dotted #c9c9c9"></div>
<div class="abs" style="left:-2px;top:203.8px;width:44px;height:12.8px;border:1px solid #222;background:#fff"></div><div class="tl" style="left:-4px;top:210.1px;color:#111">0</div><div class="tl" style="left:-3.2px;top:249.8px;color:#222">状态</div><div class="abs" style="left:-3px;top:257.0px;width:45px;height:12.3px;border:1px solid #7a7a7a;border-radius:2px;background:linear-gradient(180deg,#f6f6f6,#dedede);box-shadow:0 1px 0 #aaa"></div><div class="tl" style="left:-5px;top:263.1px;color:#111">编辑...</div>
<div class="abs" style="left:-3px;top:270.3px;width:45px;height:12.3px;border:1px solid #7a7a7a;border-radius:2px;background:linear-gradient(180deg,#f6f6f6,#dedede);box-shadow:0 1px 0 #aaa"></div><div class="tl" style="left:-5px;top:276.4px;color:#111">编辑...</div>
<div class="abs" style="left:-3px;top:443.2px;width:45px;height:12.3px;border:1px solid #7a7a7a;border-radius:2px;background:linear-gradient(180deg,#f6f6f6,#dedede);box-shadow:0 1px 0 #aaa"></div><div class="tl" style="left:-5px;top:449.3px;color:#111">编辑...</div>
<div class="abs" style="left:-3px;top:536.3px;width:45px;height:12.3px;border:1px solid #7a7a7a;border-radius:2px;background:linear-gradient(180deg,#f6f6f6,#dedede);box-shadow:0 1px 0 #aaa"></div><div class="tl" style="left:-2.5px;top:542.4px;color:#111">&lt;无&gt;</div>
<div class="tl" style="left:-2.5px;top:409.4px;color:#9a9a9a">0.0</div><div class="tl" style="left:-1px;top:608.9px;color:#222">示</div>

<div class="abs" id="browhead" style="left:46.7px;top:109.8px;width:146.3px;height:11.2px;background:linear-gradient(90deg,#bccadd,#c6d1e1)"></div>
<div class="tl" style="left:49px;top:116px;font-size:7.8px;color:#4d607f">项目浏览器 - 项目2</div>
<svg style="left:183.6px;top:113px" width="6" height="6" viewBox="0 0 6 6"><path d="M.7 .7L5.3 5.3M5.3 .7L.7 5.3" stroke="#111" stroke-width="1.5" fill="none"/></svg>
<div class="abs" id="browbody" style="left:46.9px;top:123px;width:145.6px;height:506px;background:#fdfdfc;border-left:1.2px solid #707070;border-top:1.2px solid #6c6c6c;border-right:1px solid #cfcfcf"></div>

<svg style="left:0;top:0" width="200" height="400" viewBox="0 0 200 400" fill="none" stroke="#c2c2c2" stroke-width="1" stroke-dasharray="1 .6"><path d="M53.5 134.9 V357.85"/><path d="M67 144.25 V277.75"/><path d="M80.5 149.25 V184.3"/><path d="M53.5 130.9 H61"/><path d="M67 144.25 H77"/><path d="M80.5 157.6 H90"/><path d="M80.5 170.95 H90"/><path d="M80.5 184.3 H90"/><path d="M67 197.65 H77"/><path d="M67 211.0 H77"/><path d="M67 224.35000000000002 H77"/><path d="M67 237.7 H77"/><path d="M67 251.05 H77"/><path d="M67 264.4 H77"/><path d="M67 277.75 H77"/><path d="M53.5 291.1 H61"/><path d="M53.5 304.45 H61"/><path d="M53.5 317.8 H61"/><path d="M53.5 331.15 H61"/><path d="M53.5 344.5 H61"/><path d="M53.5 357.85 H61"/></svg>
<div class="abs" style="left:50.3px;top:127.9px;width:6px;height:6px;border:1px solid #b3b6ba;background:#fcfcfc"></div><div class="abs" style="left:51.8px;top:130.5px;width:3px;height:.9px;background:#666"></div><svg style="left:61.5px;top:126.4px" width="10" height="9" viewBox="0 0 10 9"><rect x="2.2" y="2.2" width="4.6" height="4.6" rx="1" stroke="#333" fill="#fff" stroke-width=".9"/><path d="M0 2.3V0H2.3M6.7 0H9V2.3M9 6.7V9H6.7M2.3 9H0V6.7" stroke="#444" fill="none" stroke-width=".9"/></svg><div class="tl" style="left:76px;top:130.9px;color:#161616">视图 (全部)</div>
<div class="abs" style="left:64px;top:141.2px;width:6px;height:6px;border:1px solid #b3b6ba;background:#fcfcfc"></div><div class="abs" style="left:65.5px;top:143.8px;width:3px;height:.9px;background:#666"></div><div class="tl" style="left:79px;top:144.2px;color:#161616">楼层平面</div>
<div class="tl" style="left:92.5px;top:157.6px;color:#161616">场地</div>
<div class="abs" style="left:90.5px;top:164.9px;width:29px;height:12.5px;background:#ebebeb"></div><div class="tl" style="left:92.5px;top:170.9px;color:#161616">标高 1</div>
<div class="tl" style="left:92.5px;top:184.3px;color:#161616">标高 2</div>
<div class="abs" style="left:64px;top:194.7px;width:6px;height:6px;border:1px solid #b3b6ba;background:#fcfcfc"></div><div class="abs" style="left:65.5px;top:197.2px;width:3px;height:.9px;background:#666"></div><div class="abs" style="left:66.55px;top:196.2px;width:.9px;height:3px;background:#666"></div><div class="tl" style="left:79px;top:197.7px;color:#161616">天花板平面</div>
<div class="abs" style="left:64px;top:208.0px;width:6px;height:6px;border:1px solid #b3b6ba;background:#fcfcfc"></div><div class="abs" style="left:65.5px;top:210.6px;width:3px;height:.9px;background:#666"></div><div class="abs" style="left:66.55px;top:209.5px;width:.9px;height:3px;background:#666"></div><div class="tl" style="left:79px;top:211.0px;color:#161616">三维视图</div>
<div class="abs" style="left:64px;top:221.4px;width:6px;height:6px;border:1px solid #b3b6ba;background:#fcfcfc"></div><div class="abs" style="left:65.5px;top:223.9px;width:3px;height:.9px;background:#666"></div><div class="abs" style="left:66.55px;top:222.9px;width:.9px;height:3px;background:#666"></div><div class="tl" style="left:79px;top:224.4px;color:#161616">立面 (建筑立面)</div>
<div class="abs" style="left:64px;top:234.7px;width:6px;height:6px;border:1px solid #b3b6ba;background:#fcfcfc"></div><div class="abs" style="left:65.5px;top:237.2px;width:3px;height:.9px;background:#666"></div><div class="abs" style="left:66.55px;top:236.2px;width:.9px;height:3px;background:#666"></div><div class="tl" style="left:79px;top:237.7px;color:#161616">面积平面 (人防分区面积)</div>
<div class="abs" style="left:64px;top:248.1px;width:6px;height:6px;border:1px solid #b3b6ba;background:#fcfcfc"></div><div class="abs" style="left:65.5px;top:250.6px;width:3px;height:.9px;background:#666"></div><div class="abs" style="left:66.55px;top:249.6px;width:.9px;height:3px;background:#666"></div><div class="tl" style="left:79px;top:251.1px;color:#161616">面积平面 (净面积)</div>
<div class="abs" style="left:64px;top:261.4px;width:6px;height:6px;border:1px solid #b3b6ba;background:#fcfcfc"></div><div class="abs" style="left:65.5px;top:263.9px;width:3px;height:.9px;background:#666"></div><div class="abs" style="left:66.55px;top:262.9px;width:.9px;height:3px;background:#666"></div><div class="tl" style="left:79px;top:264.4px;color:#161616">面积平面 (总建筑面积)</div>
<div class="abs" style="left:64px;top:274.8px;width:6px;height:6px;border:1px solid #b3b6ba;background:#fcfcfc"></div><div class="abs" style="left:65.5px;top:277.3px;width:3px;height:.9px;background:#666"></div><div class="abs" style="left:66.55px;top:276.2px;width:.9px;height:3px;background:#666"></div><div class="tl" style="left:79px;top:277.8px;color:#161616">面积平面 (防火分区面积)</div>
<svg style="left:61.5px;top:286.6px" width="10" height="9" viewBox="0 0 10 9"><rect x="0" y="0" width="10" height="9" fill="#f2f2f2" stroke="#444" stroke-width=".9"/><rect x=".4" y=".4" width="9.2" height="2.4" fill="#8c8c8c"/><path d="M0 3H10M4 3V9M1.5 5H3M1.5 7H3M5.5 5.5H8.5M5.5 7.2H8.5" stroke="#555" stroke-width=".9" fill="none"/></svg><div class="tl" style="left:76px;top:291.1px;color:#161616">图例</div>
<div class="abs" style="left:50.3px;top:301.4px;width:6px;height:6px;border:1px solid #b3b6ba;background:#fcfcfc"></div><div class="abs" style="left:51.8px;top:304.0px;width:3px;height:.9px;background:#666"></div><div class="abs" style="left:52.849999999999994px;top:302.9px;width:.9px;height:3px;background:#666"></div><svg style="left:61.5px;top:299.9px" width="10" height="9" viewBox="0 0 10 9"><rect x="0" y="0.5" width="10" height="8" fill="#fff" stroke="#444" stroke-width=".9"/><path d="M0 3H10M0 5.8H10M3.3 .5V8.5M6.6 .5V8.5" stroke="#555" stroke-width=".8" fill="none"/></svg><div class="tl" style="left:76px;top:304.4px;color:#161616">明细表/数量</div>
<svg style="left:61.5px;top:313.3px" width="10" height="9" viewBox="0 0 10 9"><path d="M0 0H7.5L10 2.5V9H0Z" fill="#fff" stroke="#555" stroke-width=".9"/><path d="M2 3.5H6.5V7H2ZM7.5 4V7" stroke="#777" stroke-width=".8" fill="none"/></svg><div class="tl" style="left:76px;top:317.8px;color:#161616">图纸 (全部)</div>
<div class="abs" style="left:50.3px;top:328.1px;width:6px;height:6px;border:1px solid #b3b6ba;background:#fcfcfc"></div><div class="abs" style="left:51.8px;top:330.7px;width:3px;height:.9px;background:#666"></div><div class="abs" style="left:52.849999999999994px;top:329.6px;width:.9px;height:3px;background:#666"></div><svg style="left:61.5px;top:326.6px" width="10" height="9" viewBox="0 0 10 9"><rect x="0.5" y="0" width="8.5" height="9" fill="#fff" stroke="#444" stroke-width=".9"/><path d="M2.5 2V6.5H7M4.5 2H7V4.5H4.5" stroke="#555" stroke-width=".8" fill="none"/></svg><div class="tl" style="left:76px;top:331.1px;color:#161616">族</div>
<div class="abs" style="left:50.3px;top:341.5px;width:6px;height:6px;border:1px solid #b3b6ba;background:#fcfcfc"></div><div class="abs" style="left:51.8px;top:344.1px;width:3px;height:.9px;background:#666"></div><div class="abs" style="left:52.849999999999994px;top:343.0px;width:.9px;height:3px;background:#666"></div><svg style="left:61.5px;top:340.0px" width="10" height="9" viewBox="0 0 10 9"><path d="M2 0H0V9H2M7.5 0H9.5V9H7.5" stroke="#444" fill="none" stroke-width=".9"/><circle cx="4" cy="3.8" r="2.3" fill="#fff" stroke="#444" stroke-width=".8"/><rect x="4" y="4" width="3.6" height="3.6" rx=".8" fill="#eee" stroke="#444" stroke-width=".8"/></svg><div class="tl" style="left:76px;top:344.5px;color:#161616">组</div>
<svg style="left:61.5px;top:353.4px" width="10" height="9" viewBox="0 0 10 9"><ellipse cx="2.8" cy="4.5" rx="2.3" ry="1.6" fill="#f6dc8a" stroke="#dba41c" stroke-width="1.5"/><ellipse cx="7.4" cy="4.5" rx="2.3" ry="1.6" fill="#f6dc8a" stroke="#dba41c" stroke-width="1.5"/><path d="M3.5 4.5H6.8" stroke="#8a6a10" stroke-width=".8"/></svg><div class="tl" style="left:76px;top:357.9px;color:#161616"><span style="letter-spacing:.35px">Revit</span> 链接</div>

</body></html>
